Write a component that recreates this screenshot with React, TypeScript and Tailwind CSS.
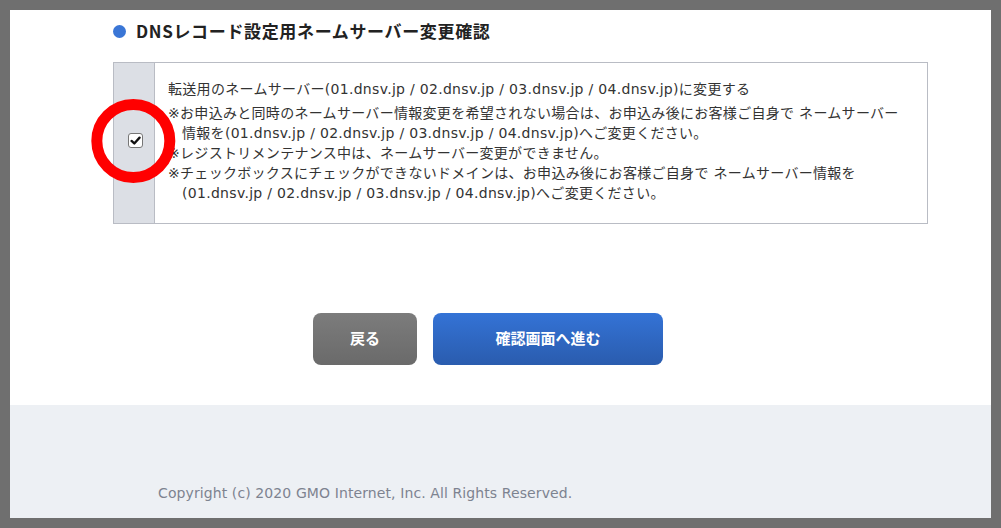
const NS_LIST = "(01.dnsv.jp / 02.dnsv.jp / 03.dnsv.jp / 04.dnsv.jp)";

const notes = [
  ["※お申込みと同時のネームサーバー情報変更を希望されない場合は、お申込み後にお客様ご自身で ネームサーバー", `情報を${NS_LIST}へご変更ください。`],
  ["※レジストリメンテナンス中は、ネームサーバー変更ができません。"],
  ["※チェックボックスにチェックができないドメインは、お申込み後にお客様ご自身で ネームサーバー情報を", `${NS_LIST}へご変更ください。`],
];

function CheckMark() {
  return (
    <span className="relative flex h-[15px] w-[15px] items-center justify-center rounded-[3px] border border-[#767676] bg-white">
      <svg width="11" height="11" viewBox="0 0 10 10">
        <path d="M1.4 5.4 L3.9 7.7 L8.7 2.4" fill="none" stroke="#111" strokeWidth="2.1" strokeLinecap="round" strokeLinejoin="round" />
      </svg>
      {/* red marker ring */}
      <span className="pointer-events-none absolute left-1/2 top-1/2 h-[84px] w-[84px] -translate-x-[52%] -translate-y-1/2 rounded-full border-[11px] border-[#ff0000]" />
    </span>
  );
}

export default function App() {
  return (
    <div className="h-[528px] w-[1001px] bg-[#6f6f6f] p-[10px]" style={{ fontFamily: '"DejaVu Sans", "Noto Sans CJK JP", sans-serif' }}>
      <div className="flex h-full flex-col bg-white">
        {/* Section */}
        <div className="pl-[103px]">
          <h2 className="mt-[9px] flex items-center gap-[10px] text-[17px] font-bold leading-[24px] tracking-[0.65px] text-[#222]">
            <span className="h-[13px] w-[13px] rounded-full bg-[#3a76d6]" />
            <span style={{ fontFamily: '"Noto Sans CJK JP", sans-serif' }}>DNSレコード設定用ネームサーバー変更確認</span>
          </h2>

          <div className="mt-[19px] flex w-[815px] border border-[#b9bcc4]">
            <div className="flex w-[41px] shrink-0 items-center justify-center border-r border-[#b9bcc4] bg-[#dcdfe5] pb-[5px] pl-[2px]">
              <CheckMark />
            </div>
            <div className="whitespace-nowrap pb-[20px] pl-[13px] pr-4 pt-[16px] text-[14px] leading-[20px] tracking-[0.3px] text-[#333]">
              <p className="mb-[4px]">転送用のネームサーバー{NS_LIST}に変更する</p>
              {notes.map((lines) => (
                <p key={lines[0]}>
                  {lines[0]}
                  {lines[1] && (
                    <>
                      <br />
                      <span className="pl-[1em]">{lines[1]}</span>
                    </>
                  )}
                </p>
              ))}
            </div>
          </div>
        </div>

        {/* Buttons */}
        <div className="mt-[89px] flex gap-4 pl-[303px]">
          <button className="h-[52px] w-[104px] rounded-[8px] bg-gradient-to-b from-[#7c7c7c] to-[#6a6a6a] text-[15px] font-bold text-white">
            戻る
          </button>
          <button className="h-[52px] w-[230px] rounded-[8px] bg-gradient-to-b from-[#3473d6] to-[#2a5cae] text-[15px] font-bold text-white">
            確認画面へ進む
          </button>
        </div>

        {/* Footer */}
        <div className="mt-auto flex h-[113px] flex-col justify-end bg-[#edf0f4] pb-[16px] pl-[148px]">
          <p className="text-[14px] leading-[18px] tracking-[0.1px] text-[#7d8390]" style={{ fontFamily: '"DejaVu Sans", "Liberation Sans", sans-serif' }}>
            Copyright (c) 2020 GMO Internet, Inc. All Rights Reserved.
          </p>
        </div>
      </div>
    </div>
  );
}
